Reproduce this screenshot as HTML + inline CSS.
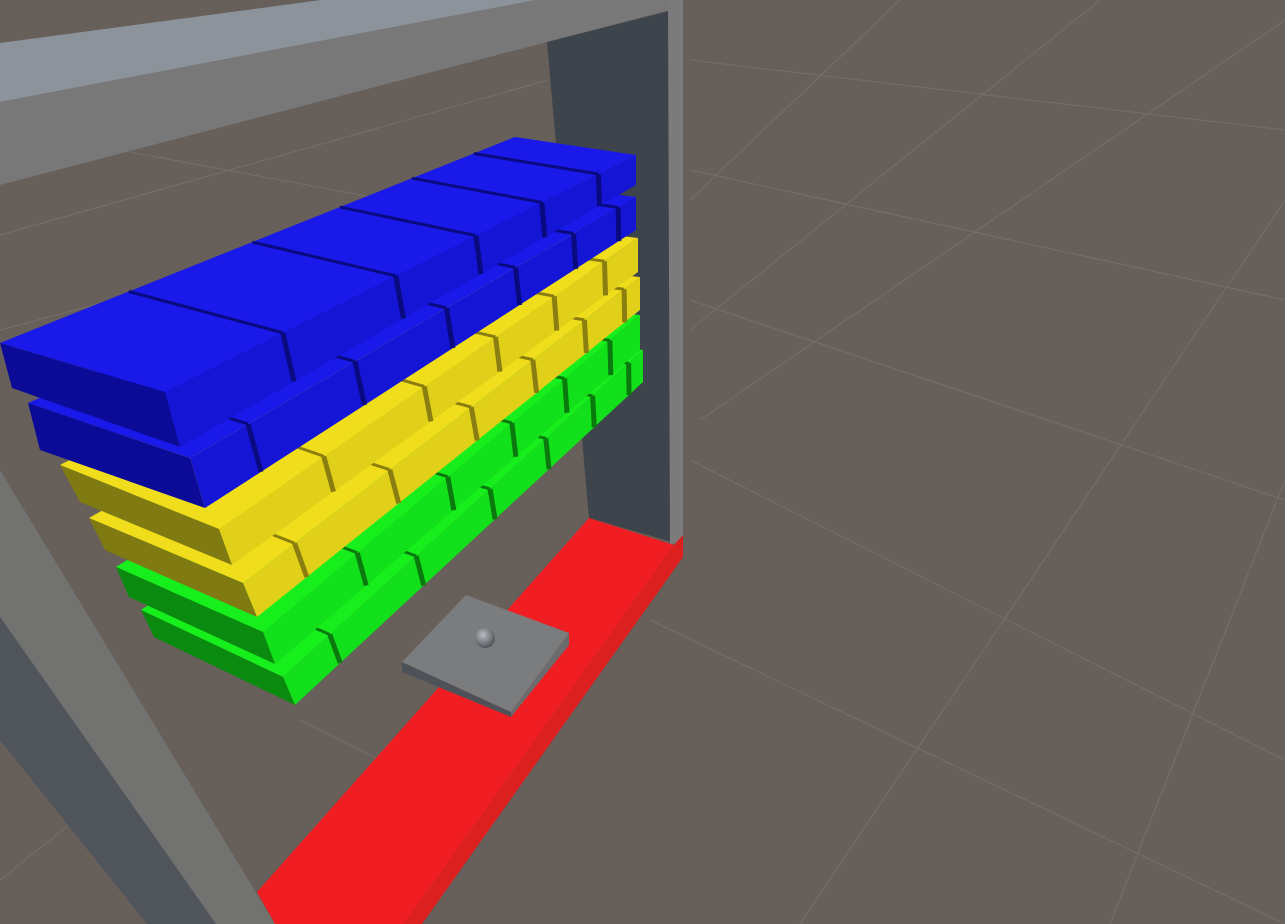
<!DOCTYPE html>
<html><head><meta charset="utf-8"><style>html,body{margin:0;padding:0;background:#675f5a;overflow:hidden}svg{display:block}</style></head>
<body>
<svg id="s" width="1285" height="924" viewBox="0 0 1285 924" xmlns="http://www.w3.org/2000/svg">
<rect width="1285" height="924" fill="#675f5a"/>
<g stroke="#7a736e" stroke-width="1" fill="none" opacity="0.8">
<line x1="690" y1="60" x2="1285" y2="130"/>
<line x1="690" y1="170" x2="1285" y2="300"/>
<line x1="690" y1="300" x2="1285" y2="500"/>
<line x1="690" y1="460" x2="1285" y2="760"/>
<line x1="650" y1="620" x2="1285" y2="924"/>
<line x1="1285" y1="20" x2="700" y2="420"/>
<line x1="1285" y1="200" x2="800" y2="924"/>
<line x1="1100" y1="0" x2="690" y2="330"/>
<line x1="900" y1="0" x2="690" y2="200"/>
<line x1="1285" y1="480" x2="1110" y2="924"/>
<line x1="0" y1="235" x2="548" y2="80"/>
<line x1="0" y1="330" x2="300" y2="250"/>
<line x1="130" y1="152" x2="548" y2="230"/>
<line x1="0" y1="880" x2="150" y2="760"/>
<line x1="300" y1="720" x2="420" y2="780"/>
</g>
<!-- top beam -->
<polygon points="0,43 321,0 536,0 0,102" fill="#8c939b"/>
<polygon points="0,102 536,0 670,0 670,10 547,42 0,185" fill="#787878"/>
<!-- right post -->
<polygon points="547,42 669,11 672,542 589,518" fill="#3e444c"/>
<polygon points="668,0 683,0 683,540 670,545" fill="#7b7b7b"/>
<!-- red bar -->
<polygon points="589,518 674,545 404,924 275,924 257,892" fill="#f01e22"/>
<polygon points="674,545 683,535 683,557 422,924 404,924" fill="#dc1f1f"/>
<!-- paddle -->
<polygon points="402,662 511,712 511,717 402,672" fill="#4d5158"/>
<polygon points="569,633 569,645 511,717 511,712" fill="#6a6c6e"/>
<polygon points="402,662 466,595 569,633 511,712" fill="#7a7c7e"/>
<defs><radialGradient id="bg1" cx="0.4" cy="0.35" r="0.7"><stop offset="0" stop-color="#b8bcc0"/><stop offset="1" stop-color="#4a4e54"/></radialGradient></defs>
<circle cx="485" cy="638" r="10" fill="url(#bg1)"/>
<!-- left post -->
<polygon points="0,470 275,924 216,924 0,617" fill="#727270"/>
<polygon points="0,617 216,924 147,924 0,740" fill="#50555c"/>
<g id="bricks"></g>
</svg>
<script>
var rows=[
{A:[141,610],D:[283,677],Dd:[295,705],Ad:[154,637],B:[540,340],C:[643,350],Cd:[643,382],c:['#16ef1c','#12e01a','#0b8a10','#0a7a0e'],t:[.13,.37,.575,.73,.86,.96]},
{A:[116,567],D:[263,632],Dd:[275,664],Ad:[129,597],B:[535,305],C:[640,315],Cd:[640,350],c:['#16ef1c','#12e01a','#0b8a10','#0a7a0e'],t:[.25,.49,.66,.80,.92]},
{A:[89,518],D:[243,583],Dd:[257,617],Ad:[105,550],B:[530,265],C:[640,277],Cd:[640,310],c:['#f0de1c','#e0d01a','#807a12','#8a7e10'],t:[.13,.37,.575,.73,.86,.96]},
{A:[60,465],D:[219,529],Dd:[232,565],Ad:[80,502],B:[525,225],C:[638,238],Cd:[638,272],c:['#f0de1c','#e0d01a','#807a12','#8a7e10'],t:[.25,.49,.66,.80,.92]},
{A:[28,403],D:[190,458],Dd:[205,508],Ad:[40,450],B:[520,182],C:[636,197],Cd:[636,230],c:['#1919ea','#1515d6','#0b0b98','#0a0a80'],t:[.13,.37,.575,.73,.86,.96]},
{A:[0,343],D:[165,392],Dd:[180,447],Ad:[12,388],B:[515,137],C:[636,155],Cd:[636,185],c:['#1919ea','#1515d6','#0b0b98','#0a0a80'],t:[.25,.49,.66,.80,.92]}
];
function p(a){return a.join(',')}
function L(a,b,t){return [a[0]+(b[0]-a[0])*t,a[1]+(b[1]-a[1])*t]}
var h='';
rows.forEach(function(r){
h+='<polygon points="'+[r.D,r.C,r.Cd,r.Dd].map(p).join(' ')+'" fill="'+r.c[1]+'"/>';
h+='<polygon points="'+[r.A,r.B,r.C,r.D].map(p).join(' ')+'" fill="'+r.c[0]+'"/>';
h+='<polygon points="'+[r.A,r.D,r.Dd,r.Ad].map(p).join(' ')+'" fill="'+r.c[2]+'"/>';
r.t.forEach(function(t){
var b=L(r.A,r.B,t),n=L(r.D,r.C,t),d=L(r.Dd,r.Cd,t);
h+='<line x1="'+b[0]+'" y1="'+b[1]+'" x2="'+n[0]+'" y2="'+n[1]+'" stroke="'+r.c[3]+'" stroke-width="3"/>';
h+='<line x1="'+n[0]+'" y1="'+n[1]+'" x2="'+d[0]+'" y2="'+d[1]+'" stroke="'+r.c[3]+'" stroke-width="5"/>';
});
});
document.getElementById('bricks').innerHTML=h;
</script>
</body></html>
